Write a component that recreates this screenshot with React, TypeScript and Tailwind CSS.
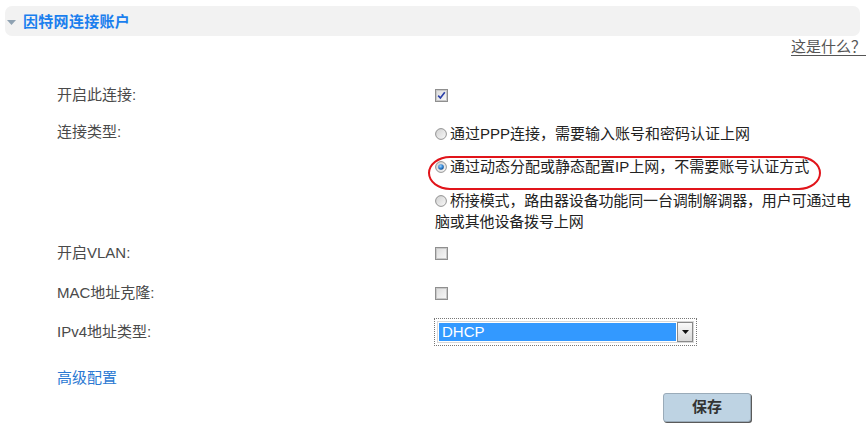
import React from "react";

const FONT = { fontFamily: '"Liberation Sans", "Noto Sans CJK SC", sans-serif' };

function Checkbox({ checked }: { checked?: boolean }) {
  return (
    <svg width="13" height="13" viewBox="0 0 13 13" className="block">
      <defs>
        <linearGradient id={checked ? "cbg1" : "cbg0"} x1="0" y1="0" x2="1" y2="1">
          <stop offset="0" stopColor="#dcdcdc" />
          <stop offset="1" stopColor="#f8f8f8" />
        </linearGradient>
      </defs>
      <rect x="0.5" y="0.5" width="12" height="12" fill="#fff" stroke="#8f8f8f" />
      <rect x="1.5" y="1.5" width="10" height="10" fill={`url(#${checked ? "cbg1" : "cbg0"})`} stroke="#c8c8c8" />
      {checked && (
        <path d="M3.2 6.6 L5.4 9 L9.8 3.2" fill="none" stroke="#2a3fa8" strokeWidth="1.6" />
      )}
    </svg>
  );
}

function Radio({ checked }: { checked?: boolean }) {
  return (
    <svg width="12" height="12" viewBox="0 0 12 12" className="block">
      <defs>
        <linearGradient id="rbg" x1="0" y1="0" x2="1" y2="1">
          <stop offset="0" stopColor="#cfcfcf" />
          <stop offset="1" stopColor="#fafafa" />
        </linearGradient>
        <radialGradient id="rdot" cx="0.4" cy="0.35" r="0.7">
          <stop offset="0" stopColor="#9fd4ff" />
          <stop offset="0.6" stopColor="#2b7fd0" />
          <stop offset="1" stopColor="#0b3f7a" />
        </radialGradient>
      </defs>
      <circle cx="6" cy="6" r="5.4" fill="url(#rbg)" stroke="#888" strokeWidth="0.9" />
      {checked && <circle cx="6" cy="6" r="2.8" fill="url(#rdot)" />}
    </svg>
  );
}

export default function App() {
  return (
    <div className="relative w-[868px] h-[429px] bg-white text-[15px]" style={FONT}>
      {/* header */}
      <div className="ml-[5px] mr-[8px] mt-[6px] h-[30px] rounded-[7px] bg-[#f2f2f2] flex items-center">
        <svg width="9" height="5" viewBox="0 0 9 5" className="ml-[2px] mt-[3px]">
          <path d="M0 0 H9 L4.5 5 Z" fill="#8fa2b2" />
        </svg>
        <span className="ml-[7px] font-bold text-[#1a7fee] leading-none tracking-[0.3px]">因特网连接账户</span>
      </div>

      {/* help */}
      <div className="h-[20px] flex items-center justify-end pr-[2px]">
        <span className="text-[#555] underline underline-offset-[3px] leading-none">这是什么？</span>
      </div>

      <div className="pl-[57px] text-[#4a4a4a]">
        {/* row 1 */}
        <div className="mt-[26px] h-[26px] flex items-center">
          <div className="w-[378px]">开启此连接:</div>
          <Checkbox checked />
        </div>

        {/* row 2 */}
        <div className="mt-[12px] flex">
          <div className="w-[378px] h-[24px] flex items-center">连接类型:</div>
          <div className="text-[#222]">
            <div className="h-[28px] flex items-center">
              <Radio />
              <span className="ml-[3px]">通过PPP连接，需要输入账号和密码认证上网</span>
            </div>
            <div className="h-[38px] flex items-center">
              <Radio checked />
              <span className="ml-[3px]">通过动态分配或静态配置IP上网，不需要账号认证方式</span>
            </div>
            <div className="mt-[4px] leading-[21px] tracking-[-0.15px] whitespace-nowrap">
              <div className="flex items-center">
                <Radio />
                <span className="ml-[3px]">桥接模式，路由器设备功能同一台调制解调器，用户可通过电</span>
              </div>
              <div>脑或其他设备拨号上网</div>
            </div>
          </div>
        </div>

        {/* VLAN */}
        <div className="mt-[8px] h-[26px] flex items-center">
          <div className="w-[378px]">开启VLAN:</div>
          <Checkbox />
        </div>

        {/* MAC */}
        <div className="mt-[14px] h-[26px] flex items-center">
          <div className="w-[378px]">MAC地址克隆:</div>
          <Checkbox />
        </div>

        {/* IPv4 */}
        <div className="mt-[12px] h-[28px] flex items-center">
          <div className="w-[377px]">IPv4地址类型:</div>
          <div className="w-[263px] h-[28px] border border-dotted border-[#777] p-[2px]">
            <div className="h-full flex border border-[#d8d8d8] bg-white">
              <div className="flex-1 bg-[#3399ff] text-white flex items-center pl-[3px] m-[1px]">
                DHCP
              </div>
              <div className="w-[16px] border border-[#8a8a8a] bg-gradient-to-b from-[#fafafa] to-[#d9d9d9] flex items-center justify-center">
                <svg width="7" height="4" viewBox="0 0 7 4">
                  <path d="M0 0 H7 L3.5 4 Z" fill="#111" />
                </svg>
              </div>
            </div>
          </div>
        </div>

        {/* advanced */}
        <div className="mt-[19px] h-[26px] flex items-center text-[#2a78d2]">高级配置</div>
      </div>

      {/* save */}
      <div className="pl-[663px] mt-[2px]">
        <button className="w-[88px] h-[29px] rounded-[3px] bg-[#bed3e3] border border-[#9aabb9] shadow-[1px_1px_0_#5a5a5a] text-[#333] font-bold text-[15px]">
          保存
        </button>
      </div>

      {/* red annotation ring */}
      <div className="absolute left-[428px] top-[150px] w-[393px] h-[34px] border-2 border-[#e1141a] rounded-[22px/17px] pointer-events-none" />
    </div>
  );
}
